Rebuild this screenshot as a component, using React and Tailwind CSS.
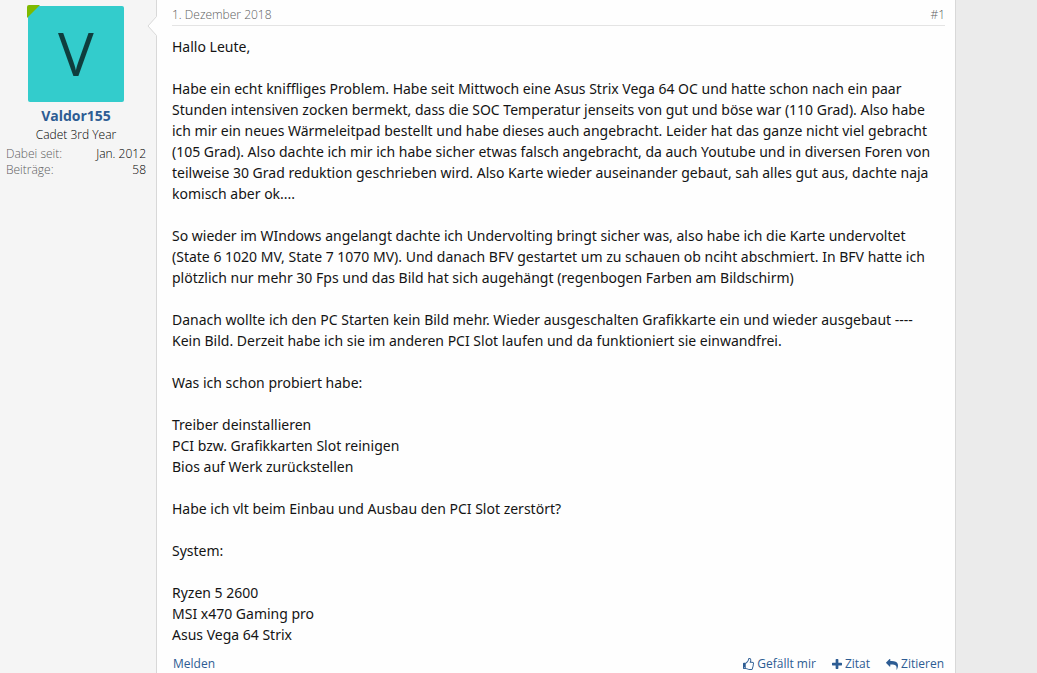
import React from "react";

const paragraphs = [
  ["Hallo Leute,"],
  [
    "Habe ein echt kniffliges Problem. Habe seit Mittwoch eine Asus Strix Vega 64 OC und hatte schon nach ein paar",
    "Stunden intensiven zocken bermekt, dass die SOC Temperatur jenseits von gut und böse war (110 Grad). Also habe",
    "ich mir ein neues Wärmeleitpad bestellt und habe dieses auch angebracht. Leider hat das ganze nicht viel gebracht",
    "(105 Grad). Also dachte ich mir ich habe sicher etwas falsch angebracht, da auch Youtube und in diversen Foren von",
    "teilweise 30 Grad reduktion geschrieben wird. Also Karte wieder auseinander gebaut, sah alles gut aus, dachte naja",
    "komisch aber ok....",
  ],
  [
    "So wieder im WIndows angelangt dachte ich Undervolting bringt sicher was, also habe ich die Karte undervoltet",
    "(State 6 1020 MV, State 7 1070 MV). Und danach BFV gestartet um zu schauen ob nciht abschmiert. In BFV hatte ich",
    "plötzlich nur mehr 30 Fps und das Bild hat sich augehängt (regenbogen Farben am Bildschirm)",
  ],
  [
    "Danach wollte ich den PC Starten kein Bild mehr. Wieder ausgeschalten Grafikkarte ein und wieder ausgebaut ----",
    "Kein Bild. Derzeit habe ich sie im anderen PCI Slot laufen und da funktioniert sie einwandfrei.",
  ],
  ["Was ich schon probiert habe:"],
  ["Treiber deinstallieren", "PCI bzw. Grafikkarten Slot reinigen", "Bios auf Werk zurückstellen"],
  ["Habe ich vlt beim Einbau und Ausbau den PCI Slot zerstört?"],
  ["System:"],
  ["Ryzen 5 2600", "MSI x470 Gaming pro", "Asus Vega 64 Strix"],
];

const stats = [
  ["Dabei seit:", "Jan. 2012"],
  ["Beiträge:", "58"],
];

function ThumbIcon() {
  return (
    <svg aria-hidden="true" viewBox="128 0 1536 1792" className="h-[13px] w-[11px] fill-current">
      <path d="M384 1344q0-26-19-45t-45-19-45 19-19 45 19 45 45 19 45-19 19-45zm1152-576q0-51-39-89.5t-89-38.5h-352q0-58 48-159.5t48-160.5q0-98-32-145t-128-47q-26 26-38 85t-30.5 125.5-59.5 109.5q-22 23-77 91-4 5-23 30t-31.5 41-34.5 42.5-40 44-38.5 35.5-40 27-35.5 9h-32v640h32q13 0 31.5 3t33 6.5 38 11 35 11.5 35.5 12.5 29 10.5q211 73 342 73h121q192 0 192-167 0-26-5-56 30-16 47.5-52.5t17.5-73.5-18-69q53-50 53-119 0-25-10-55.5t-25-47.5q32-1 53.5-47t21.5-81zm128-1q0 89-49 163 9 33 9 69 0 77-38 144 3 21 3 43 0 101-60 178 1 139-85 219.5t-227 80.5h-129q-96 0-189.5-22.5t-216.5-65.5q-116-40-138-40h-288q-53 0-90.5-37.5t-37.5-90.5v-640q0-53 37.5-90.5t90.5-37.5h274q36-24 137-155 58-75 107-128 24-25 35.5-85.5t30.5-126.5 62-108q39-37 90-37 84 0 151 32.5t102 101.5 35 186q0 93-48 192h176q104 0 180 76t76 179z" />
    </svg>
  );
}

function PlusIcon() {
  return (
    <svg aria-hidden="true" viewBox="192 0 1408 1792" className="h-[13px] w-2.5 fill-current">
      <path d="M1600 736v192q0 40-28 68t-68 28h-416v416q0 40-28 68t-68 28h-192q-40 0-68-28t-28-68v-416h-416q-40 0-68-28t-28-68v-192q0-40 28-68t68-28h416v-416q0-40 28-68t68-28h192q40 0 68 28t28 68v416h416q40 0 68 28t28 68z" />
    </svg>
  );
}

function ReplyIcon() {
  return (
    <svg aria-hidden="true" viewBox="0 0 1792 1792" className="h-[13px] w-3 fill-current">
      <path d="M1792 1120q0 166-127 451-3 7-10.5 24t-13.5 30-13 22q-12 17-28 17-15 0-23.5-10t-8.5-25q0-9 2.5-26.5t2.5-23.5q5-68 5-123 0-101-17.5-181t-48.5-138.5-80-101-105.5-69.5-133-42.5-154-21.5-175.5-6h-224v256q0 26-19 45t-45 19-45-19l-512-512q-19-19-19-45t19-45l512-512q19-19 45-19t45 19 19 45v256h224q713 0 875 403 53 134 53 333z" />
    </svg>
  );
}

const actions = [
  { label: "Gefällt mir", Icon: ThumbIcon },
  { label: "Zitat", Icon: PlusIcon },
  { label: "Zitieren", Icon: ReplyIcon },
];

export default function App() {
  return (
    <div className="flex min-h-screen bg-[#ebebeb] font-['Open_Sans','Noto_Sans',sans-serif] text-[#141414]">
      <article className="mr-[81px] flex flex-1 border-r border-[#d8d8d8] bg-[#fefefe]">
        <aside className="relative w-[157px] shrink-0 border-r border-[#d8d8d8] bg-[#f5f5f5] pt-1.5 pr-2.5 pl-1.5">
          <svg aria-hidden="true" viewBox="0 0 10 20" className="absolute top-4 -right-px h-5 w-2.5">
            <path d="M10 0L1 10L10 20Z" fill="#fefefe" />
            <path d="M9.5 0.5L1 10L9.5 19.5" fill="none" stroke="#d8d8d8" />
          </svg>
          <a
            href="#profil"
            aria-label="Profil von Valdor155"
            className="relative mx-auto flex size-24 items-center justify-center rounded-xs bg-[#33cccc] pb-0.5 text-[60px] leading-none text-[#0f3d3d]"
          >
            V
            <svg aria-hidden="true" viewBox="0 0 13 13" className="absolute -top-px -left-px size-[13px]">
              <path d="M2 0H13L0 13V2Q0 0 2 0Z" fill="#7fb900" />
            </svg>
          </a>
          <h4 className="mt-1 text-center text-[14px] leading-5 font-bold">
            <a href="#profil" className="text-[#2d5c93]">Valdor155</a>
          </h4>
          <p className="text-center text-xs leading-[18px] font-light text-black">Cadet 3rd Year</p>
          <dl className="mt-0.5 text-xs leading-4 font-light text-black">
            {stats.map(([label, value]) => (
              <div key={label} className="flex justify-between">
                <dt className="text-[#606060]">{label}</dt>
                <dd>{value}</dd>
              </div>
            ))}
          </dl>
        </aside>
        <div className="min-w-0 flex-1 pr-2.5 pl-[15px]">
          <header className="mb-2.5 flex justify-between border-b border-[#e4e4e4] pt-[5px] text-xs leading-5 font-light text-[#606060]">
            <a href="#beitrag">1. Dezember 2018</a>
            <a href="#beitrag">#1</a>
          </header>
          <div className="flex flex-col gap-[21px] font-['Noto_Sans',sans-serif] text-[14px] leading-[21px]">
            {paragraphs.map((lines, i) => (
              <p key={i}>
                {lines.map((line, j) => (
                  <React.Fragment key={j}>
                    {j > 0 && <br />}
                    {line}
                  </React.Fragment>
                ))}
              </p>
            ))}
          </div>
          <footer className="mt-2.5 flex justify-between px-px text-xs leading-[18px] text-[#2d5c93]">
            <a href="#melden">Melden</a>
            <div className="flex gap-4">
              {actions.map(({ label, Icon }) => (
                <button key={label} type="button" className="flex items-center gap-[3px]">
                  <Icon />
                  {label}
                </button>
              ))}
            </div>
          </footer>
        </div>
      </article>
    </div>
  );
}
